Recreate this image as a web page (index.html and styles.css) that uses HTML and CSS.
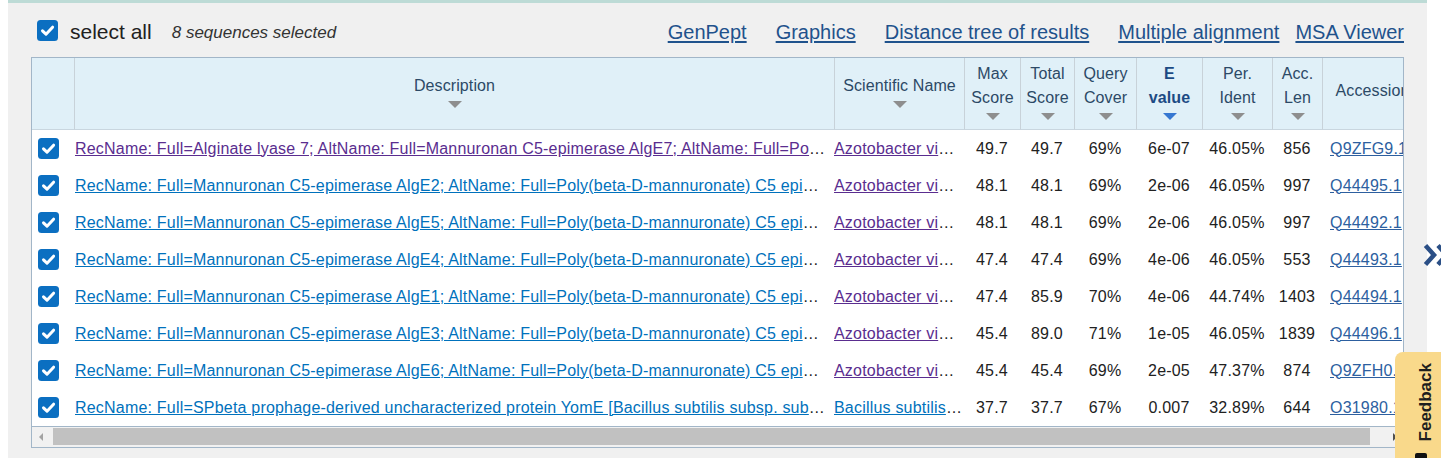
FILE: index.html
```html
<!DOCTYPE html>
<html lang="en">
<head>
<meta charset="utf-8">
<title>Sequences producing significant alignments</title>
<link rel="stylesheet" href="styles.css">
</head>
<body>
<div class="panel">
  <div class="toolbar">
    <span class="cb"><svg width="21" height="21" viewBox="0 0 21 21"><rect x="0" y="0" width="21" height="21" rx="3.5" fill="#0b6fc1"/><path d="M5.5 10.8 L9 14.2 L15.6 7.2" fill="none" stroke="#fff" stroke-width="3" stroke-linecap="round" stroke-linejoin="round"/></svg></span>
    <span class="select-all">select all</span>
    <span class="count">8 sequences selected</span>
    <nav class="links">
      <a href="#" class="tlink">GenPept</a>
      <a href="#" class="tlink">Graphics</a>
      <a href="#" class="tlink">Distance tree of results</a>
      <a href="#" class="tlink">Multiple alignment</a>
      <a href="#" class="tlink tlink-last">MSA Viewer</a>
    </nav>
  </div>

  <div class="grid">
    <div class="viewport">
      <table class="results">
        <colgroup>
          <col class="c-cb"><col class="c-desc"><col class="c-sci"><col class="c-max"><col class="c-total"><col class="c-query"><col class="c-e"><col class="c-per"><col class="c-len"><col class="c-acc">
        </colgroup>
        <thead>
          <tr>
            <th class="h-cb"></th>
            <th><div class="lbl">Description</div><i class="sort"></i></th>
            <th class="h-sci"><div class="lbl">Scientific Name</div><i class="sort"></i></th>
            <th><div class="lbl">Max<br>Score</div><i class="sort"></i></th>
            <th><div class="lbl">Total<br>Score</div><i class="sort"></i></th>
            <th><div class="lbl">Query<br>Cover</div><i class="sort"></i></th>
            <th class="sorted"><div class="lbl">E<br>value</div><i class="sort"></i></th>
            <th><div class="lbl">Per.<br>Ident</div><i class="sort"></i></th>
            <th><div class="lbl">Acc.<br>Len</div><i class="sort"></i></th>
            <th><div class="lbl">Accession</div></th>
          </tr>
        </thead>
        <tbody>
          <tr>
            <td class="d-cb"><span class="cb"><svg width="21" height="21" viewBox="0 0 21 21"><rect width="21" height="21" rx="3.5" fill="#0b6fc1"/><path d="M5.5 10.8 L9 14.2 L15.6 7.2" fill="none" stroke="#fff" stroke-width="3" stroke-linecap="round" stroke-linejoin="round"/></svg></span></td>
            <td class="d-desc"><a href="#" class="visited">RecName: Full=Alginate lyase 7; AltName: Full=Mannuronan C5-epimerase AlgE7; AltName: Full=Poly(beta-D-mannuronate) C5 epimerase 7</a></td>
            <td class="d-sci"><a href="#" class="visited">Azotobacter vinelandii</a></td>
            <td class="num">49.7</td><td class="num">49.7</td><td class="num">69%</td><td class="num">6e-07</td><td class="num">46.05%</td><td class="num">856</td>
            <td class="d-acc"><a href="#">Q9ZFG9.1</a></td>
          </tr>
          <tr>
            <td class="d-cb"><span class="cb"><svg width="21" height="21" viewBox="0 0 21 21"><rect width="21" height="21" rx="3.5" fill="#0b6fc1"/><path d="M5.5 10.8 L9 14.2 L15.6 7.2" fill="none" stroke="#fff" stroke-width="3" stroke-linecap="round" stroke-linejoin="round"/></svg></span></td>
            <td class="d-desc"><a href="#">RecName: Full=Mannuronan C5-epimerase AlgE2; AltName: Full=Poly(beta-D-mannuronate) C5 epimerase 2</a></td>
            <td class="d-sci"><a href="#" class="visited">Azotobacter vinelandii</a></td>
            <td class="num">48.1</td><td class="num">48.1</td><td class="num">69%</td><td class="num">2e-06</td><td class="num">46.05%</td><td class="num">997</td>
            <td class="d-acc"><a href="#">Q44495.1</a></td>
          </tr>
          <tr>
            <td class="d-cb"><span class="cb"><svg width="21" height="21" viewBox="0 0 21 21"><rect width="21" height="21" rx="3.5" fill="#0b6fc1"/><path d="M5.5 10.8 L9 14.2 L15.6 7.2" fill="none" stroke="#fff" stroke-width="3" stroke-linecap="round" stroke-linejoin="round"/></svg></span></td>
            <td class="d-desc"><a href="#">RecName: Full=Mannuronan C5-epimerase AlgE5; AltName: Full=Poly(beta-D-mannuronate) C5 epimerase 5</a></td>
            <td class="d-sci"><a href="#" class="visited">Azotobacter vinelandii</a></td>
            <td class="num">48.1</td><td class="num">48.1</td><td class="num">69%</td><td class="num">2e-06</td><td class="num">46.05%</td><td class="num">997</td>
            <td class="d-acc"><a href="#">Q44492.1</a></td>
          </tr>
          <tr>
            <td class="d-cb"><span class="cb"><svg width="21" height="21" viewBox="0 0 21 21"><rect width="21" height="21" rx="3.5" fill="#0b6fc1"/><path d="M5.5 10.8 L9 14.2 L15.6 7.2" fill="none" stroke="#fff" stroke-width="3" stroke-linecap="round" stroke-linejoin="round"/></svg></span></td>
            <td class="d-desc"><a href="#">RecName: Full=Mannuronan C5-epimerase AlgE4; AltName: Full=Poly(beta-D-mannuronate) C5 epimerase 4</a></td>
            <td class="d-sci"><a href="#" class="visited">Azotobacter vinelandii</a></td>
            <td class="num">47.4</td><td class="num">47.4</td><td class="num">69%</td><td class="num">4e-06</td><td class="num">46.05%</td><td class="num">553</td>
            <td class="d-acc"><a href="#">Q44493.1</a></td>
          </tr>
          <tr>
            <td class="d-cb"><span class="cb"><svg width="21" height="21" viewBox="0 0 21 21"><rect width="21" height="21" rx="3.5" fill="#0b6fc1"/><path d="M5.5 10.8 L9 14.2 L15.6 7.2" fill="none" stroke="#fff" stroke-width="3" stroke-linecap="round" stroke-linejoin="round"/></svg></span></td>
            <td class="d-desc"><a href="#">RecName: Full=Mannuronan C5-epimerase AlgE1; AltName: Full=Poly(beta-D-mannuronate) C5 epimerase 1</a></td>
            <td class="d-sci"><a href="#" class="visited">Azotobacter vinelandii</a></td>
            <td class="num">47.4</td><td class="num">85.9</td><td class="num">70%</td><td class="num">4e-06</td><td class="num">44.74%</td><td class="num">1403</td>
            <td class="d-acc"><a href="#">Q44494.1</a></td>
          </tr>
          <tr>
            <td class="d-cb"><span class="cb"><svg width="21" height="21" viewBox="0 0 21 21"><rect width="21" height="21" rx="3.5" fill="#0b6fc1"/><path d="M5.5 10.8 L9 14.2 L15.6 7.2" fill="none" stroke="#fff" stroke-width="3" stroke-linecap="round" stroke-linejoin="round"/></svg></span></td>
            <td class="d-desc"><a href="#">RecName: Full=Mannuronan C5-epimerase AlgE3; AltName: Full=Poly(beta-D-mannuronate) C5 epimerase 3</a></td>
            <td class="d-sci"><a href="#" class="visited">Azotobacter vinelandii</a></td>
            <td class="num">45.4</td><td class="num">89.0</td><td class="num">71%</td><td class="num">1e-05</td><td class="num">46.05%</td><td class="num">1839</td>
            <td class="d-acc"><a href="#">Q44496.1</a></td>
          </tr>
          <tr>
            <td class="d-cb"><span class="cb"><svg width="21" height="21" viewBox="0 0 21 21"><rect width="21" height="21" rx="3.5" fill="#0b6fc1"/><path d="M5.5 10.8 L9 14.2 L15.6 7.2" fill="none" stroke="#fff" stroke-width="3" stroke-linecap="round" stroke-linejoin="round"/></svg></span></td>
            <td class="d-desc"><a href="#">RecName: Full=Mannuronan C5-epimerase AlgE6; AltName: Full=Poly(beta-D-mannuronate) C5 epimerase 6</a></td>
            <td class="d-sci"><a href="#" class="visited">Azotobacter vinelandii</a></td>
            <td class="num">45.4</td><td class="num">45.4</td><td class="num">69%</td><td class="num">2e-05</td><td class="num">47.37%</td><td class="num">874</td>
            <td class="d-acc"><a href="#">Q9ZFH0.1</a></td>
          </tr>
          <tr>
            <td class="d-cb"><span class="cb"><svg width="21" height="21" viewBox="0 0 21 21"><rect width="21" height="21" rx="3.5" fill="#0b6fc1"/><path d="M5.5 10.8 L9 14.2 L15.6 7.2" fill="none" stroke="#fff" stroke-width="3" stroke-linecap="round" stroke-linejoin="round"/></svg></span></td>
            <td class="d-desc"><a href="#">RecName: Full=SPbeta prophage-derived uncharacterized protein YomE [Bacillus subtilis subsp. subtilis str. 168]</a></td>
            <td class="d-sci"><a href="#">Bacillus subtilis subsp. subtilis str. 168</a></td>
            <td class="num">37.7</td><td class="num">37.7</td><td class="num">67%</td><td class="num">0.007</td><td class="num">32.89%</td><td class="num">644</td>
            <td class="d-acc"><a href="#">O31980.1</a></td>
          </tr>
        </tbody>
      </table>
    </div>
    <div class="hscroll">
      <span class="sb-btn"><i class="arr-left"></i></span>
      <span class="sb-thumb"></span>
      <span class="sb-btn sb-right"><i class="arr-right"></i></span>
    </div>
  </div>
</div>

<div class="next"><svg width="18" height="24" viewBox="0 0 18 24"><path d="M2.5 2.5 L11 12 L2.5 21.5" fill="none" stroke="#2b4f86" stroke-width="4.5" stroke-linejoin="miter"/><path d="M15 2.5 L23.5 12 L15 21.5" fill="none" stroke="#2b4f86" stroke-width="4.5"/></svg></div>

<div class="feedback">
  <span class="fb-text">Feedback</span>
  <span class="fb-icon"></span>
</div>
</body>
</html>
```

FILE: styles.css
```css
* { box-sizing: border-box; }

html, body {
  margin: 0;
  padding: 0;
  background: #ffffff;
}

body {
  font-family: "Liberation Sans", Arial, sans-serif;
  color: #212121;
  overflow: hidden;
  height: 458px;
}

.panel {
  margin-left: 8px;
  width: 1419px;
  height: 458px;
  background: #f0f0f0;
  border-top: 3px solid #bddbd6;
  padding: 0 23px;
}

/* toolbar */
.toolbar {
  height: 54px;
  display: flex;
  align-items: center;
}

.cb {
  display: inline-block;
  width: 21px;
  height: 21px;
  line-height: 0;
}

.toolbar .cb {
  margin-left: 6px;
}

.select-all {
  margin-left: 12px;
  font-size: 21px;
  color: #212121;
  position: relative;
  top: 2px;
}

.count {
  margin-left: 20px;
  font-size: 17px;
  font-style: italic;
  color: #333333;
  position: relative;
  top: 3px;
}

.links {
  margin-left: auto;
  display: flex;
  align-items: center;
  position: relative;
  top: 2px;
}

.tlink {
  font-size: 20px;
  color: #1f528c;
  text-decoration: underline;
  text-underline-offset: 2px;
  margin-left: 29px;
}

.tlink-last {
  margin-left: 16px;
}

/* table box */
.grid {
  width: 1373px;
  border: 1px solid #a2b6c8;
  background: #ffffff;
}

.viewport {
  overflow: hidden;
  width: 1371px;
}

table.results {
  table-layout: fixed;
  border-collapse: separate;
  border-spacing: 0;
  width: 1390px;
  font-size: 16px;
}

.c-cb { width: 42px; }
.c-desc { width: 760px; }
.c-sci { width: 130px; }
.c-max { width: 56px; }
.c-total { width: 54px; }
.c-query { width: 62px; }
.c-e { width: 66px; }
.c-per { width: 70px; }
.c-len { width: 50px; }
.c-acc { width: 100px; }

thead tr { height: 72px; }

th {
  background: #e0f0f8;
  border-left: 1px solid #c8d2d9;
  border-bottom: 1px solid #c9d6df;
  font-weight: normal;
  color: #2c4966;
  text-align: center;
  vertical-align: middle;
  padding: 0 1px 6px;
  line-height: 24px;
  white-space: nowrap;
  overflow: hidden;
  letter-spacing: 0.1px;
}

th.h-cb { border-left: none; }
th.h-sci { padding: 0 0 6px; }

.sort {
  display: block;
  width: 0;
  height: 0;
  margin: 3px auto 0;
  border-left: 7px solid transparent;
  border-right: 7px solid transparent;
  border-top: 7px solid #8e8e8e;
}

th.sorted {
  font-weight: bold;
  color: #1c4a84;
}

th.sorted .sort {
  border-top-color: #3677d1;
}

tbody tr { height: 37px; }

td {
  padding: 0;
  vertical-align: middle;
  white-space: nowrap;
  overflow: hidden;
  text-overflow: ellipsis;
  letter-spacing: 0.2px;
}

td.d-cb {
  padding-left: 6px;
  line-height: 0;
}

td.d-desc { padding: 0 6px 0 1px; }
td.d-sci { padding: 0 2px 0 0; }

td a {
  color: #0071bc;
  text-decoration: underline;
}

td a.visited { color: #5a2d8f; }

td.num {
  text-align: center;
  color: #212121;
}

td.d-acc { padding-left: 8px; }
td.d-acc a { color: #2d5f9f; }

/* fake horizontal scrollbar */
.hscroll {
  height: 21px;
  border-top: 1px solid #a2b6c8;
  background: #f1f1f1;
  display: flex;
  align-items: flex-start;
}

.sb-btn {
  width: 17px;
  height: 20px;
  display: flex;
  align-items: center;
  justify-content: center;
}

.sb-right { margin-left: auto; }

.arr-left {
  width: 0;
  height: 0;
  border-top: 4px solid transparent;
  border-bottom: 4px solid transparent;
  border-right: 4px solid #a3a3a3;
}

.arr-right {
  width: 0;
  height: 0;
  border-top: 4px solid transparent;
  border-bottom: 4px solid transparent;
  border-left: 4px solid #505050;
}

.sb-thumb {
  margin-left: 4px;
  margin-top: 1px;
  width: 1317px;
  height: 17px;
  background: #c1c1c1;
}

/* overlays */
.next {
  position: absolute;
  left: 1423px;
  top: 243px;
  line-height: 0;
}

.feedback {
  position: fixed;
  left: 1395px;
  top: 352px;
  width: 60px;
  height: 130px;
  background: #f9d98b;
  border-top-left-radius: 8px;
}

.fb-text {
  position: absolute;
  left: 22px;
  top: 11px;
  writing-mode: vertical-rl;
  transform: rotate(180deg);
  font-size: 17px;
  font-weight: bold;
  color: #1e1e1e;
  line-height: 17px;
}

.fb-icon {
  position: absolute;
  left: 20px;
  top: 101px;
  width: 12px;
  height: 12px;
  background: #111111;
  border-radius: 2px;
}
```
